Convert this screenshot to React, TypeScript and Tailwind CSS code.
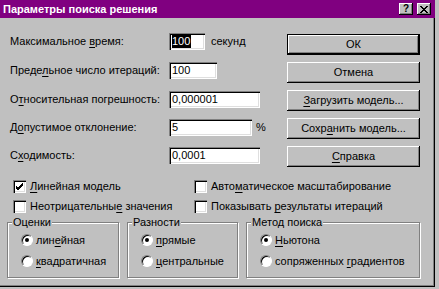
import React from "react";

const sunken =
  "bg-white shadow-[inset_1px_1px_0_#808080,inset_2px_2px_0_#000,inset_-1px_-1px_0_#fff,inset_-2px_-2px_0_#dfdfdf]";
const raised =
  "bg-[#c0c0c0] shadow-[inset_-1px_-1px_0_#000,inset_1px_1px_0_#fff,inset_-2px_-2px_0_#808080]";

function U({ children }: { children: React.ReactNode }) {
  return <span className="underline underline-offset-[2px]">{children}</span>;
}

function Field({
  label,
  value,
  width,
  selected,
  suffix,
  mt,
}: {
  label: React.ReactNode;
  value: string;
  width: string;
  selected?: boolean;
  suffix?: React.ReactNode;
  mt: string;
}) {
  return (
    <div className={`flex items-center h-[17px] ${mt}`}>
      <div className="w-[161px] pl-[2px] whitespace-nowrap">{label}</div>
      <div className={`${sunken} ${width} h-[17px] flex items-center pl-[3px]`}>
        {selected ? (
          <span className="bg-black text-white leading-[13px] pr-[1px]">{value}</span>
        ) : (
          <span className="leading-[13px]">{value}</span>
        )}
      </div>
      {suffix}
    </div>
  );
}

function Btn({ children, def, mt }: { children: React.ReactNode; def?: boolean; mt: string }) {
  return (
    <div
      className={`${mt} w-[133px] h-[21px] flex items-center justify-center ${
        def
          ? "bg-[#c0c0c0] shadow-[inset_0_0_0_1px_#000,inset_-2px_-2px_0_#000,inset_2px_2px_0_#fff,inset_-3px_-3px_0_#808080]"
          : raised
      }`}
    >
      {children}
    </div>
  );
}

function Check({ checked, children }: { checked?: boolean; children: React.ReactNode }) {
  return (
    <div className="flex items-center gap-[4px] h-[13px] whitespace-nowrap">
      <div className={`${sunken} w-[13px] h-[13px] flex items-center justify-center`}>
        {checked && (
          <svg width="9" height="9" viewBox="0 0 9 9">
            <path d="M1 4 L3 6 L8 1 M1 5 L3 7 L8 2 M1 6 L3 8 L8 3" stroke="#000" strokeWidth="1" fill="none" />
          </svg>
        )}
      </div>
      <span>{children}</span>
    </div>
  );
}

function Radio({ checked, children }: { checked?: boolean; children: React.ReactNode }) {
  return (
    <div className="flex items-center gap-[3px] h-[12px] ml-[9px] whitespace-nowrap">
      <div className="w-[12px] h-[12px] rounded-full bg-white border border-t-[#808080] border-l-[#808080] border-b-white border-r-white shadow-[inset_1px_1px_0_#000] flex items-center justify-center">
        {checked && <div className="w-[4px] h-[4px] rounded-full bg-black" />}
      </div>
      <span>{children}</span>
    </div>
  );
}

function Group({
  title,
  width,
  children,
}: {
  title: string;
  width: string;
  children: React.ReactNode;
}) {
  return (
    <fieldset
      className={`${width} h-[62px] m-0 pl-[4px] pr-0 pt-0 pb-0 border border-[#808080] shadow-[1px_1px_0_#fff,inset_1px_1px_0_#fff]`}
    >
      <legend className="px-[1px] leading-[13px] bg-[#c0c0c0]">{title}</legend>
      <div className="flex flex-col gap-[9px] mt-[5px]">{children}</div>
    </fieldset>
  );
}

export default function App() {
  return (
    <div className="w-[439px] h-[289px] bg-[#c0c0c0] overflow-hidden text-[11px] leading-[13px] text-black font-['Liberation_Sans',Arial,sans-serif]">
      <div className="w-[435px] h-[287px] flex flex-col shadow-[inset_-1px_-1px_0_#000,inset_-2px_-2px_0_#808080]">
        {/* Title bar */}
        <div className="h-[18px] bg-[#800080] flex items-center justify-between pl-[3px] pr-[4px]">
          <span className="text-white font-bold text-[11px] whitespace-nowrap">
            Параметры поиска решения
          </span>
          <div className="flex gap-[4px]">
            <div className={`${raised} w-[14px] h-[12px] flex items-center justify-center font-bold text-[10px] leading-[10px]`}>
              ?
            </div>
            <div className={`${raised} w-[14px] h-[12px] flex items-center justify-center`}>
              <svg width="8" height="7" viewBox="0 0 8 7">
                <path d="M0 0 L7 7 M1 0 L8 7 M7 0 L0 7 M8 0 L1 7" stroke="#000" strokeWidth="1" fill="none" />
              </svg>
            </div>
          </div>
        </div>

        {/* Top section */}
        <div className="flex pl-[8px] pt-[15px]">
          <div className="w-[279px] flex flex-col">
            <Field
              mt="mt-0"
              label={
                <>
                  Максимальное <U>в</U>ремя:
                </>
              }
              value="100"
              width="w-[36px]"
              selected
              suffix={<span className="ml-[6px]">секунд</span>}
            />
            <Field
              mt="mt-[12px]"
              label={
                <>
                  Преде<U>л</U>ьное число итераций:
                </>
              }
              value="100"
              width="w-[48px]"
            />
            <Field
              mt="mt-[12px]"
              label={
                <>
                  О<U>т</U>носительная погрешность:
                </>
              }
              value="0,000001"
              width="w-[91px]"
            />
            <Field
              mt="mt-[11px]"
              label={
                <>
                  Д<U>о</U>пустимое отклонение:
                </>
              }
              value="5"
              width="w-[83px]"
              suffix={<span className="ml-[4px]">%</span>}
            />
            <Field
              mt="mt-[11px]"
              label={
                <>
                  С<U>х</U>одимость:
                </>
              }
              value="0,0001"
              width="w-[91px]"
            />
          </div>
          <div className="flex flex-col">
            <Btn mt="mt-[1px]" def>
              ОК
            </Btn>
            <Btn mt="mt-[7px]">Отмена</Btn>
            <Btn mt="mt-[7px]">
              <span>
                <U>З</U>агрузить модель...
              </span>
            </Btn>
            <Btn mt="mt-[7px]">
              <span>
                Сохр<U>а</U>нить модель...
              </span>
            </Btn>
            <Btn mt="mt-[7px]">
              <span>
                <U>С</U>правка
              </span>
            </Btn>
          </div>
        </div>

        {/* Checkboxes */}
        <div className="grid grid-cols-[181px_auto] gap-y-[7px] pl-[13px] mt-[13px]">
          <Check checked>
            <U>Л</U>инейная модель
          </Check>
          <Check>
            Авто<U>м</U>атическое масштабирование
          </Check>
          <Check>
            Неотрицательны<U>е</U> значения
          </Check>
          <Check>
            Показывать <U>р</U>езультаты итераций
          </Check>
        </div>

        {/* Groups */}
        <div className="flex gap-[8px] pl-[7px] mt-[3px]">
          <Group title="Оценки" width="w-[112px]">
            <Radio checked>
              лин<U>е</U>йная
            </Radio>
            <Radio>
              <U>к</U>вадратичная
            </Radio>
          </Group>
          <Group title="Разности" width="w-[111px]">
            <Radio checked>
              <U>п</U>рямые
            </Radio>
            <Radio>
              <U>ц</U>ентральные
            </Radio>
          </Group>
          <Group title="Метод поиска" width="w-[174px]">
            <Radio checked>
              <U>Н</U>ьютона
            </Radio>
            <Radio>
              сопряженных <U>г</U>радиентов
            </Radio>
          </Group>
        </div>
      </div>
    </div>
  );
}
